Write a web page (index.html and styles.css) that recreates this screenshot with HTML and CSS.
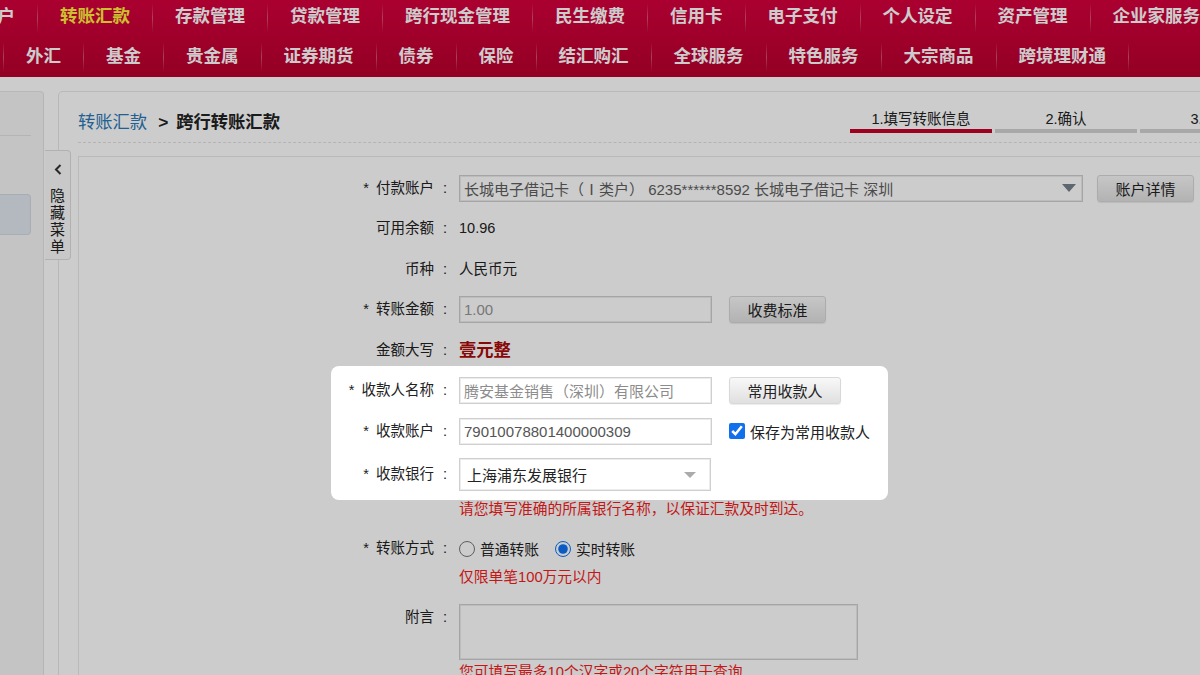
FILE: index.html
```html
<!DOCTYPE html>
<html lang="zh-CN">
<head>
<meta charset="utf-8">
<title>跨行转账汇款</title>
<link rel="stylesheet" href="styles.css">
</head>
<body>
<header class="topnav">
  <nav class="nav-row nav-main">
    <a class="nav-item">我的账户</a>
    <a class="nav-item active">转账汇款</a>
    <a class="nav-item">存款管理</a>
    <a class="nav-item">贷款管理</a>
    <a class="nav-item">跨行现金管理</a>
    <a class="nav-item">民生缴费</a>
    <a class="nav-item">信用卡</a>
    <a class="nav-item">电子支付</a>
    <a class="nav-item">个人设定</a>
    <a class="nav-item">资产管理</a>
    <a class="nav-item">企业家服务</a>
  </nav>
  <nav class="nav-row nav-sub">
    <a class="nav-item">外汇</a>
    <a class="nav-item">基金</a>
    <a class="nav-item">贵金属</a>
    <a class="nav-item">证券期货</a>
    <a class="nav-item">债券</a>
    <a class="nav-item">保险</a>
    <a class="nav-item">结汇购汇</a>
    <a class="nav-item">全球服务</a>
    <a class="nav-item">特色服务</a>
    <a class="nav-item">大宗商品</a>
    <a class="nav-item">跨境理财通</a>
  </nav>
</header>

<div class="workspace">
  <aside class="sidebar">
    <div class="side-head"></div>
    <div class="side-btn"></div>
  </aside>

  <button class="menu-toggle" type="button">
    <svg class="chevron" width="8" height="11" viewBox="0 0 8 11"><path d="M6.5 1 2 5.5l4.5 4.5" fill="none" stroke="#333" stroke-width="2"/></svg>
    <span class="toggle-text">隐藏菜单</span>
  </button>

  <main class="panel">
    <div class="panel-head">
      <div class="crumbs">
        <a class="crumb-link">转账汇款</a><span class="crumb-sep">&gt;</span><span class="crumb-current">跨行转账汇款</span>
      </div>
      <ol class="steps">
        <li class="step current">1.填写转账信息</li>
        <li class="step">2.确认</li>
        <li class="step">3.完成</li>
      </ol>
    </div>

    <form class="transfer-form">
      <div class="row">
        <label class="label"><span class="req">*</span>付款账户<span class="colon">:</span></label>
        <div class="value ctl ctl-tight">
          <div class="select select-wide">
            <span>长城电子借记卡（Ⅰ类户） 6235******8592 长城电子借记卡 深圳</span>
            <svg class="caret" width="14" height="8" viewBox="0 0 14 8"><path d="M0 0H14L7 8Z"/></svg>
          </div>
          <button class="btn" type="button">账户详情</button>
        </div>
      </div>

      <div class="row">
        <span class="label">可用余额<span class="colon">:</span></span>
        <div class="value text">10.96</div>
      </div>

      <div class="row">
        <span class="label">币种<span class="colon">:</span></span>
        <div class="value text">人民币元</div>
      </div>

      <div class="row">
        <label class="label"><span class="req">*</span>转账金额<span class="colon">:</span></label>
        <div class="value ctl">
          <input class="field field-amount" value="1.00">
          <button class="btn" type="button">收费标准</button>
        </div>
      </div>

      <div class="row">
        <span class="label">金额大写<span class="colon">:</span></span>
        <div class="value text amount-words">壹元整</div>
      </div>

      <div class="spot">
        <div class="row">
          <label class="label"><span class="req">*</span>收款人名称<span class="colon">:</span></label>
          <div class="value ctl">
            <input class="field field-payee" value="腾安基金销售（深圳）有限公司">
            <button class="btn" type="button">常用收款人</button>
          </div>
        </div>

        <div class="row">
          <label class="label"><span class="req">*</span>收款账户<span class="colon">:</span></label>
          <div class="value ctl">
            <input class="field field-account" value="79010078801400000309">
            <label class="check"><input type="checkbox" checked>保存为常用收款人</label>
          </div>
        </div>

        <div class="row row-bank">
          <label class="label"><span class="req">*</span>收款银行<span class="colon">:</span></label>
          <div class="value ctl">
            <div class="select select-bank">
              <span>上海浦东发展银行</span>
              <svg class="caret" width="12" height="6" viewBox="0 0 12 6"><path d="M0 0H12L6 6Z"/></svg>
            </div>
          </div>
        </div>
      </div>

      <div class="row row-note">
        <span class="label"></span>
        <p class="hint hint-inline">请您填写准确的所属银行名称，以保证汇款及时到达。</p>
      </div>

      <div class="row row-mode">
        <span class="label"><span class="req">*</span>转账方式<span class="colon">:</span></span>
        <div class="value">
          <div class="ctl radios">
            <label class="radio"><input type="radio" name="mode">普通转账</label>
            <label class="radio"><input type="radio" name="mode" checked>实时转账</label>
          </div>
          <p class="hint hint-mode">仅限单笔100万元以内</p>
        </div>
      </div>

      <div class="row">
        <label class="label">附言<span class="colon">:</span></label>
        <div class="value">
          <textarea class="memo"></textarea>
          <p class="hint hint-memo">您可填写最多10个汉字或20个字符用于查询</p>
        </div>
      </div>
    </form>
  </main>
</div>
</body>
</html>
```

FILE: styles.css
```css
html, body {
  margin: 0;
  height: 100%;
  overflow: hidden;
}

body {
  font-family: "Liberation Sans", "Noto Sans CJK SC", sans-serif;
  font-size: 14.5px;
  color: #222;
  background: #fff;
}

/* ---------- top navigation ---------- */
.topnav {
  height: 77px;
  overflow: hidden;
  background: linear-gradient(#d5003d, #b9002d);
}

.nav-row {
  display: flex;
  white-space: nowrap;
}

.nav-main {
  height: 37px;
  margin-left: -78px;
}

.nav-sub {
  height: 40px;
  margin-left: 3px;
}

.nav-item {
  display: block;
  flex-shrink: 0;
  padding: 0 22px 0 23px;
  color: #fff;
  font-size: 17.5px;
  font-weight: 700;
  text-decoration: none;
  background: linear-gradient(rgba(255,255,255,0), rgba(255,255,255,.32), rgba(255,255,255,0)) left top 3px / 1px 30px no-repeat;
}

.nav-main .nav-item { line-height: 33px; }

.nav-sub .nav-item {
  line-height: 38px;
  background-position: left top 5px;
}

.nav-sub .nav-item:last-child {
  padding-right: 23px;
  background:
    linear-gradient(rgba(255,255,255,0), rgba(255,255,255,.32), rgba(255,255,255,0)) left top 5px / 1px 30px no-repeat,
    linear-gradient(rgba(255,255,255,0), rgba(255,255,255,.32), rgba(255,255,255,0)) right top 5px / 1px 30px no-repeat;
}

.nav-item.active { color: #fff03c; }

/* ---------- workspace ---------- */
.workspace {
  position: relative;
  display: flex;
  align-items: flex-start;
  padding-top: 14px;
}

.sidebar {
  flex-shrink: 0;
  width: 43px;
  height: 700px;
  background: #f5f5f5;
  border-top: 1px solid #e6e6e6;
  border-right: 1px solid #e3e3e3;
  border-top-right-radius: 4px;
}

.side-head {
  width: 31px;
  height: 43px;
  border-bottom: 1px solid #e2e2e2;
}

.side-btn {
  width: 30px;
  height: 39px;
  margin-top: 58px;
  background: #e2e7ef;
  border: 1px solid #d2d9e3;
  border-left: 0;
  border-radius: 0 4px 4px 0;
}

.menu-toggle {
  position: absolute;
  left: 45px;
  top: 73px;
  z-index: 5;
  width: 26px;
  height: 110px;
  box-sizing: border-box;
  padding: 13px 0 0;
  margin: 0;
  display: flex;
  flex-direction: column;
  align-items: center;
  background: #fafafa;
  border: 1px solid #dedede;
  border-left: 0;
  border-radius: 0 4px 4px 0;
  font: inherit;
  color: #222;
}

.chevron { display: block; margin-bottom: 12px; }

.toggle-text {
  display: block;
  width: 16px;
  font-size: 15px;
  line-height: 17px;
  text-align: center;
}

/* ---------- main panel ---------- */
.panel {
  flex-shrink: 0;
  width: 1204px;
  margin-left: 14px;
  padding: 0 20px 0 19px;
  min-height: 700px;
  background: #fff;
  border-top: 1px solid #e8e8e8;
  border-left: 1px solid #e6e6e6;
  border-top-left-radius: 5px;
}

.panel-head {
  display: flex;
  align-items: flex-end;
  height: 50px;
  border-bottom: 1px dashed #e2e2e2;
}

.crumbs {
  font-size: 17.3px;
  line-height: 24px;
  padding-bottom: 8px;
  white-space: nowrap;
}

.crumb-link { color: #2b79b6; }

.crumb-sep {
  margin: 0 8px 0 11px;
  font-weight: 700;
}

.crumb-current { font-weight: 700; }

.steps {
  display: flex;
  gap: 3px;
  margin: 0 0 0 auto;
  padding: 0 0 9px;
  list-style: none;
}

.step {
  width: 142px;
  text-align: center;
  line-height: 18px;
  padding-bottom: 1px;
  border-bottom: 4px solid #d3d3d3;
  white-space: nowrap;
}

.step.current { border-bottom-color: #c60028; }

/* ---------- form ---------- */
.transfer-form {
  margin-top: 13px;
  padding-top: 17.5px;
  min-height: 600px;
  border: 1px solid #e9e9e9;
}

.row {
  display: flex;
  align-items: flex-start;
  margin-bottom: 13.5px;
}

.label {
  flex-shrink: 0;
  width: 373px;
  line-height: 27px;
  text-align: right;
  white-space: nowrap;
}

.req { margin-right: 7px; }

.colon {
  display: inline-block;
  width: 14px;
  margin-left: 4px;
  text-align: center;
}

.value { margin-left: 7px; }

.text {
  line-height: 27px;
  white-space: nowrap;
}

.amount-words {
  color: #aa0a0a;
  font-weight: 700;
  font-size: 17.3px;
}

.ctl {
  display: flex;
  align-items: center;
  gap: 17px;
  white-space: nowrap;
}

.ctl-tight { gap: 14px; }

.field,
.select,
.memo {
  box-sizing: border-box;
  background: #fff;
  border: 1px solid #cfcfcf;
  box-shadow: inset 0 0 0 1px #ececec;
  font: inherit;
  font-size: 15px;
}

.field {
  width: 253px;
  height: 27px;
  padding: 0 4px;
  outline: none;
}

.field-amount { color: #969696; }
.field-payee { color: #8c8c8c; }
.field-account { color: #555; }

.select {
  display: flex;
  align-items: center;
  justify-content: space-between;
}

.select-wide {
  width: 624px;
  height: 27px;
  padding: 0 6px 0 4px;
  color: #5e5e5e;
}

.select-wide .caret { fill: #76818b; }

.select-bank {
  width: 252px;
  height: 33px;
  padding: 0 14px 0 7px;
  color: #222;
}

.select-bank .caret { fill: #ababab; }

.row-bank .label { line-height: 33px; }

.btn {
  height: 27px;
  padding: 0 17.5px;
  font: inherit;
  font-size: 15px;
  color: #222;
  background: linear-gradient(#f8f8f8, #e0e0e0);
  border: 1px solid #d8d8d8;
  border-radius: 3px;
  box-shadow: 0 1px 1px rgba(0,0,0,.08);
}

.check,
.radio {
  display: flex;
  align-items: center;
}

.check { font-size: 15px; }

.check input {
  width: 16px;
  height: 16px;
  margin: 0 5px 0 0;
  accent-color: #1170eb;
}

.radios {
  height: 27px;
  gap: 16px;
  font-size: 14.75px;
}

.radio input {
  width: 16px;
  height: 16px;
  margin: 0 5px 0 0;
  accent-color: #0d74f5;
}

/* the three payee rows stay lit while the rest of the page is dimmed */
.spot {
  position: relative;
  margin-bottom: 8px;
}

.spot .row:last-child { margin-bottom: 0; }

.spot::before {
  content: "";
  position: absolute;
  left: 252px;
  width: 557px;
  top: -11px;
  bottom: -9px;
  border-radius: 8px;
  box-shadow: 0 0 0 2400px rgba(0,0,0,.2);
  z-index: 50;
  pointer-events: none;
}

.hint {
  margin: 4px 0 0;
  line-height: 20px;
  font-size: 14.75px;
  color: #f51c1c;
  white-space: nowrap;
}

.row-note { margin-bottom: 16px; }

.hint-inline { margin: 0 0 0 7px; }

.hint-mode { margin-top: 5px; }

.row-mode { margin-bottom: 17px; }

.memo {
  display: block;
  width: 399px;
  height: 56px;
  resize: none;
}

.hint-memo { margin-top: 2px; }
```
